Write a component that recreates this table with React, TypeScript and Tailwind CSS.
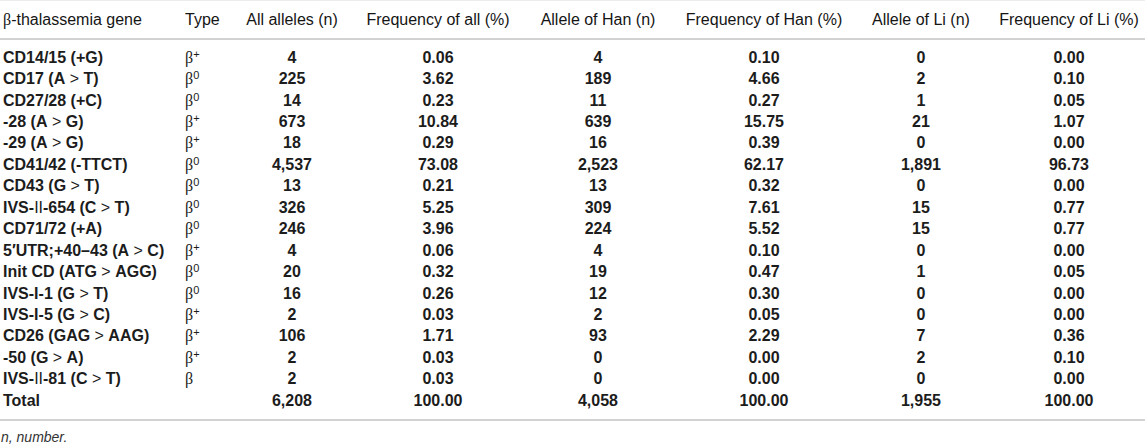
type Row = {
  gene: string;
  type: "+" | "0" | "";
  all: string;
  freqAll: string;
  han: string;
  freqHan: string;
  li: string;
  freqLi: string;
};

const rows: Row[] = [
  { gene: "CD14/15 (+G)", type: "+", all: "4", freqAll: "0.06", han: "4", freqHan: "0.10", li: "0", freqLi: "0.00" },
  { gene: "CD17 (A > T)", type: "0", all: "225", freqAll: "3.62", han: "189", freqHan: "4.66", li: "2", freqLi: "0.10" },
  { gene: "CD27/28 (+C)", type: "0", all: "14", freqAll: "0.23", han: "11", freqHan: "0.27", li: "1", freqLi: "0.05" },
  { gene: "-28 (A > G)", type: "+", all: "673", freqAll: "10.84", han: "639", freqHan: "15.75", li: "21", freqLi: "1.07" },
  { gene: "-29 (A > G)", type: "+", all: "18", freqAll: "0.29", han: "16", freqHan: "0.39", li: "0", freqLi: "0.00" },
  { gene: "CD41/42 (-TTCT)", type: "0", all: "4,537", freqAll: "73.08", han: "2,523", freqHan: "62.17", li: "1,891", freqLi: "96.73" },
  { gene: "CD43 (G > T)", type: "0", all: "13", freqAll: "0.21", han: "13", freqHan: "0.32", li: "0", freqLi: "0.00" },
  { gene: "IVS-II-654 (C > T)", type: "0", all: "326", freqAll: "5.25", han: "309", freqHan: "7.61", li: "15", freqLi: "0.77" },
  { gene: "CD71/72 (+A)", type: "0", all: "246", freqAll: "3.96", han: "224", freqHan: "5.52", li: "15", freqLi: "0.77" },
  { gene: "5′UTR;+40–43 (A > C)", type: "+", all: "4", freqAll: "0.06", han: "4", freqHan: "0.10", li: "0", freqLi: "0.00" },
  { gene: "Init CD (ATG > AGG)", type: "0", all: "20", freqAll: "0.32", han: "19", freqHan: "0.47", li: "1", freqLi: "0.05" },
  { gene: "IVS-I-1 (G > T)", type: "0", all: "16", freqAll: "0.26", han: "12", freqHan: "0.30", li: "0", freqLi: "0.00" },
  { gene: "IVS-I-5 (G > C)", type: "+", all: "2", freqAll: "0.03", han: "2", freqHan: "0.05", li: "0", freqLi: "0.00" },
  { gene: "CD26 (GAG > AAG)", type: "+", all: "106", freqAll: "1.71", han: "93", freqHan: "2.29", li: "7", freqLi: "0.36" },
  { gene: "-50 (G > A)", type: "+", all: "2", freqAll: "0.03", han: "0", freqHan: "0.00", li: "2", freqLi: "0.10" },
  { gene: "IVS-II-81 (C > T)", type: "", all: "2", freqAll: "0.03", han: "0", freqHan: "0.00", li: "0", freqLi: "0.00" },
];

// column widths picked so the centred values line up with the reference
const cols = "grid grid-cols-[182px_43px_134px_158px_162px_170px_144px_152px] items-center";

function Beta({ sup }: { sup: string }) {
  return (
    <span className="font-['Liberation_Serif'] font-normal text-[16px] whitespace-nowrap">
      β
      {sup && (
        <span className="font-['Liberation_Sans'] text-[11px] font-normal relative -top-[5px]">
          {sup}
        </span>
      )}
    </span>
  );
}

// the ">" and the roman "II" in gene names are set lighter in the source
function Gene({ text }: { text: string }) {
  const parts = text.split(" > ");
  return (
    <>
      {parts.map((p, i) => {
        const ii = p.split("-II-");
        return (
          <span key={i}>
            {i > 0 && <span className="font-normal"> &gt; </span>}
            {ii.length > 1 ? (
              <>
                {ii[0]}-<span className="font-normal">II</span>-{ii[1]}
              </>
            ) : (
              p
            )}
          </span>
        );
      })}
    </>
  );
}

export default function App() {
  return (
    <div className="w-[1145px] h-[445px] bg-white font-['Liberation_Sans',_Arial,_sans-serif] text-[#1c1c1c]">
      <div className={`${cols} h-[40px] border-t border-[#ececec] border-b-2 border-b-[#d2d2d2] text-[16px] text-[#151515]`}>
        <div className="pl-[3px] whitespace-nowrap">
          <span className="font-['Liberation_Serif']">β</span>-thalassemia gene
        </div>
        <div className="pl-[3px]">Type</div>
        <div className="text-center whitespace-nowrap">All alleles (n)</div>
        <div className="text-center whitespace-nowrap">Frequency of all (%)</div>
        <div className="text-center whitespace-nowrap">Allele of Han (n)</div>
        <div className="text-center whitespace-nowrap">Frequency of Han (%)</div>
        <div className="text-center whitespace-nowrap">Allele of Li (n)</div>
        <div className="text-center whitespace-nowrap">Frequency of Li (%)</div>
      </div>

      <div className="pt-[7px] pb-[8px] border-b-2 border-[#d2d2d2] text-[16px] font-bold">
        {rows.map((r) => (
          <div key={r.gene} className={`${cols} h-[21.44px] leading-none`}>
            <div className="pl-[3px] whitespace-nowrap">
              <Gene text={r.gene} />
            </div>
            <div className="pl-[3px]">
              <Beta sup={r.type} />
            </div>
            <div className="text-center">{r.all}</div>
            <div className="text-center">{r.freqAll}</div>
            <div className="text-center">{r.han}</div>
            <div className="text-center">{r.freqHan}</div>
            <div className="text-center">{r.li}</div>
            <div className="text-center">{r.freqLi}</div>
          </div>
        ))}
        <div className={`${cols} h-[21.44px] leading-none`}>
          <div className="pl-[3px]">Total</div>
          <div />
          <div className="text-center">6,208</div>
          <div className="text-center">100.00</div>
          <div className="text-center">4,058</div>
          <div className="text-center">100.00</div>
          <div className="text-center">1,955</div>
          <div className="text-center">100.00</div>
        </div>
      </div>

      <p className="mt-[8px] pl-[1px] text-[14px] leading-[16px] italic text-[#333]">n, number.</p>
    </div>
  );
}
